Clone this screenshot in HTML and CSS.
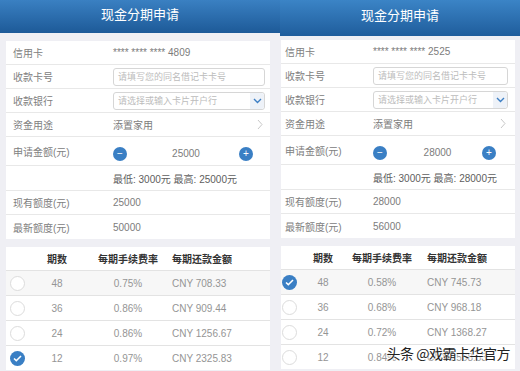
FILE: index.html
```html
<!DOCTYPE html>
<html lang="zh-CN">

<head>
    <meta charset="UTF-8">
    <title>现金分期申请</title>
    <link rel="stylesheet" href="styles.css">
</head>

<body>
    <div class="screen">

        <!-- Kairė: 25000 -->
        <div class="panel panel-left">
            <div class="topbar">现金分期申请</div>
            <div class="card form">
                <div class="row"><span class="label">信用卡</span><span class="value">**** **** **** 4809</span></div>
                <div class="row"><span class="label">收款卡号</span><div class="input">请填写您的同名借记卡卡号</div></div>
                <div class="row"><span class="label">收款银行</span>
                    <div class="input select">请选择或输入卡片开户行
                        <span class="caret"><svg width="9" height="6" viewBox="0 0 9 6"><path d="M1 1l3.5 3.5L8 1" fill="none" stroke="#3d7fc4" stroke-width="1.4"/></svg></span>
                    </div>
                </div>
                <div class="row"><span class="label">资金用途</span><span class="value grow">添置家用</span>
                    <svg class="arrow" width="6" height="11" viewBox="0 0 6 11"><path d="M1 1l4 4.5L1 10" fill="none" stroke="#c8c8c8" stroke-width="1"/></svg>
                </div>
                <div class="row row-amount"><span class="label">申请金额(元)</span>
                    <div class="stepper">
                        <span class="step">−</span><span class="amount">25000</span><span class="step">+</span>
                    </div>
                </div>
                <div class="row"><span class="label"></span><span class="value dark">最低: 3000元 最高: 25000元</span></div>
                <div class="row"><span class="label">现有额度(元)</span><span class="value">25000</span></div>
                <div class="row"><span class="label">最新额度(元)</span><span class="value">50000</span></div>
            </div>
            <div class="card plans">
                <div class="trow thead"><span></span><span>期数</span><span>每期手续费率</span><span class="money">每期还款金额</span></div>
                <div class="trow shade"><span class="radio"></span><span>48</span><span>0.75%</span><span class="money">CNY 708.33</span></div>
                <div class="trow"><span class="radio"></span><span>36</span><span>0.86%</span><span class="money">CNY 909.44</span></div>
                <div class="trow"><span class="radio"></span><span>24</span><span>0.86%</span><span class="money">CNY 1256.67</span></div>
                <div class="trow"><span class="radio checked"><svg width="9" height="7" viewBox="0 0 9 7"><path d="M1 3.5l2.3 2.2L8 1" fill="none" stroke="#fff" stroke-width="1.6"/></svg></span><span>12</span><span>0.97%</span><span class="money">CNY 2325.83</span></div>
            </div>
        </div>

        <!-- Dešinė: 28000 -->
        <div class="panel panel-right">
            <div class="topbar">现金分期申请</div>
            <div class="card form">
                <div class="row"><span class="label">信用卡</span><span class="value">**** **** **** 2525</span></div>
                <div class="row"><span class="label">收款卡号</span><div class="input">请填写您的同名借记卡卡号</div></div>
                <div class="row"><span class="label">收款银行</span>
                    <div class="input select">请选择或输入卡片开户行
                        <span class="caret"><svg width="9" height="6" viewBox="0 0 9 6"><path d="M1 1l3.5 3.5L8 1" fill="none" stroke="#3d7fc4" stroke-width="1.4"/></svg></span>
                    </div>
                </div>
                <div class="row"><span class="label">资金用途</span><span class="value grow">添置家用</span>
                    <svg class="arrow" width="6" height="11" viewBox="0 0 6 11"><path d="M1 1l4 4.5L1 10" fill="none" stroke="#c8c8c8" stroke-width="1"/></svg>
                </div>
                <div class="row row-amount"><span class="label">申请金额(元)</span>
                    <div class="stepper">
                        <span class="step">−</span><span class="amount">28000</span><span class="step">+</span>
                    </div>
                </div>
                <div class="row"><span class="label"></span><span class="value dark">最低: 3000元 最高: 28000元</span></div>
                <div class="row"><span class="label">现有额度(元)</span><span class="value">28000</span></div>
                <div class="row"><span class="label">最新额度(元)</span><span class="value">56000</span></div>
            </div>
            <div class="card plans">
                <div class="trow thead"><span></span><span>期数</span><span>每期手续费率</span><span class="money">每期还款金额</span></div>
                <div class="trow shade"><span class="radio checked"><svg width="9" height="7" viewBox="0 0 9 7"><path d="M1 3.5l2.3 2.2L8 1" fill="none" stroke="#fff" stroke-width="1.6"/></svg></span><span>48</span><span>0.58%</span><span class="money">CNY 745.73</span></div>
                <div class="trow"><span class="radio"></span><span>36</span><span>0.68%</span><span class="money">CNY 968.18</span></div>
                <div class="trow"><span class="radio"></span><span>24</span><span>0.72%</span><span class="money">CNY 1368.27</span></div>
                <div class="trow"><span class="radio"></span><span>12</span><span>0.84%</span><span class="money">CNY 2568.53</span></div>
            </div>
            <div class="watermark">头条 @戏霸卡华官方</div>
        </div>

    </div>
</body>

</html>
```

FILE: styles.css
```css
body {
    margin: 0;
    background-color: #efeff4;
    font-family: "Liberation Sans", "Noto Sans CJK SC", sans-serif;
    color: #666;
}

.screen {
    display: flex;
    width: 520px;
    height: 371px;
    overflow: hidden;
}

.panel {
    position: relative;
    display: flex;
    flex-direction: column;
}

.panel-left {
    width: 280px;
}

.panel-right {
    width: 240px;
}

.topbar {
    height: 33px;
    line-height: 29px;
    text-align: center;
    color: #fff;
    font-size: 13px;
    background: linear-gradient(#3a80c2, #1d5a98);
}

.panel-right .topbar {
    height: 36px;
    line-height: 32px;
    background: linear-gradient(#3b84c6, #1f5d9c);
}

.card {
    background-color: #fff;
}

.panel-left .card {
    margin: 8px 10px 0 6px;
}

.panel-right .card {
    margin: 4px 5px 0 1px;
}

.panel .plans {
    margin-top: 8px;
}

.form .row {
    display: flex;
    align-items: center;
    height: 24px;
    border-bottom: 1px solid #e8e8e8;
    font-size: 10px;
    box-sizing: border-box;
}

.form .row:last-child {
    border-bottom: none;
}

.form .row-amount {
    height: 29px;
}

.form .row:nth-child(6) {
    height: 25px;
}

.panel-left .row {
    padding: 0 5px 0 7px;
}

.panel-right .row {
    padding: 0 7px 0 4px;
}

.label {
    flex-shrink: 0;
    color: #808080;
}

.panel-left .label {
    width: 100px;
}

.panel-right .label {
    width: 88px;
}

.value {
    color: #7c7c7c;
}

.value.dark {
    color: #5e5e5e;
}

.grow {
    flex: 1;
}

.arrow {
    margin-right: 2px;
}

.input {
    flex: 1;
    position: relative;
    height: 16px;
    line-height: 16px;
    border: 1px solid #d6d6d6;
    border-radius: 3px;
    padding-left: 4px;
    font-size: 9px;
    color: #bcbcbc;
}

.caret {
    position: absolute;
    top: 0;
    right: 0;
    width: 14px;
    height: 16px;
    display: flex;
    align-items: center;
    justify-content: center;
    background-color: #eef2f8;
    border-radius: 0 3px 3px 0;
}

.stepper {
    flex: 1;
    display: flex;
    align-items: center;
    justify-content: space-between;
    margin: 5px 12px 0 0;
}

.step {
    width: 14px;
    height: 14px;
    line-height: 13px;
    border-radius: 50%;
    background-color: #3a7fc4;
    color: #fff;
    font-size: 10px;
    text-align: center;
}

.amount {
    font-size: 10px;
    color: #7c7c7c;
    margin-left: 6px;
}

.trow {
    display: grid;
    align-items: center;
    height: 24px;
    border-top: 1px solid #e3e3e3;
    font-size: 10px;
    color: #959595;
    text-align: center;
}

.trow:first-child {
    border-top: none;
    height: 23px;
}

.trow .money {
    text-align: left;
}

.panel-left .trow {
    grid-template-columns: 22px 58px 84px 1fr;
}

.panel-left .trow .money {
    padding-left: 2px;
}

.panel-right .trow {
    grid-template-columns: 16px 52px 66px 1fr;
}

.panel-right .trow .money {
    padding-left: 12px;
}

.thead {
    color: #333;
    font-weight: bold;
}

.shade {
    background-color: #f7f7f7;
}

.radio {
    justify-self: center;
    width: 15px;
    height: 15px;
    box-sizing: border-box;
    border: 1px solid #dcdcdc;
    border-radius: 50%;
    background-color: #fff;
    display: flex;
    align-items: center;
    justify-content: center;
}

.panel-left .radio {
    margin-left: 1px;
}

.radio.checked {
    border: none;
    background-color: #3a7fc4;
}

.watermark {
    position: absolute;
    right: 10px;
    bottom: 8px;
    font-family: "Noto Sans CJK SC", sans-serif;
    font-size: 14px;
    letter-spacing: -0.5px;
    color: #222;
    text-shadow: 0 0 2px #fff, 0 0 2px #fff, 0 0 3px #fff;
}
```
